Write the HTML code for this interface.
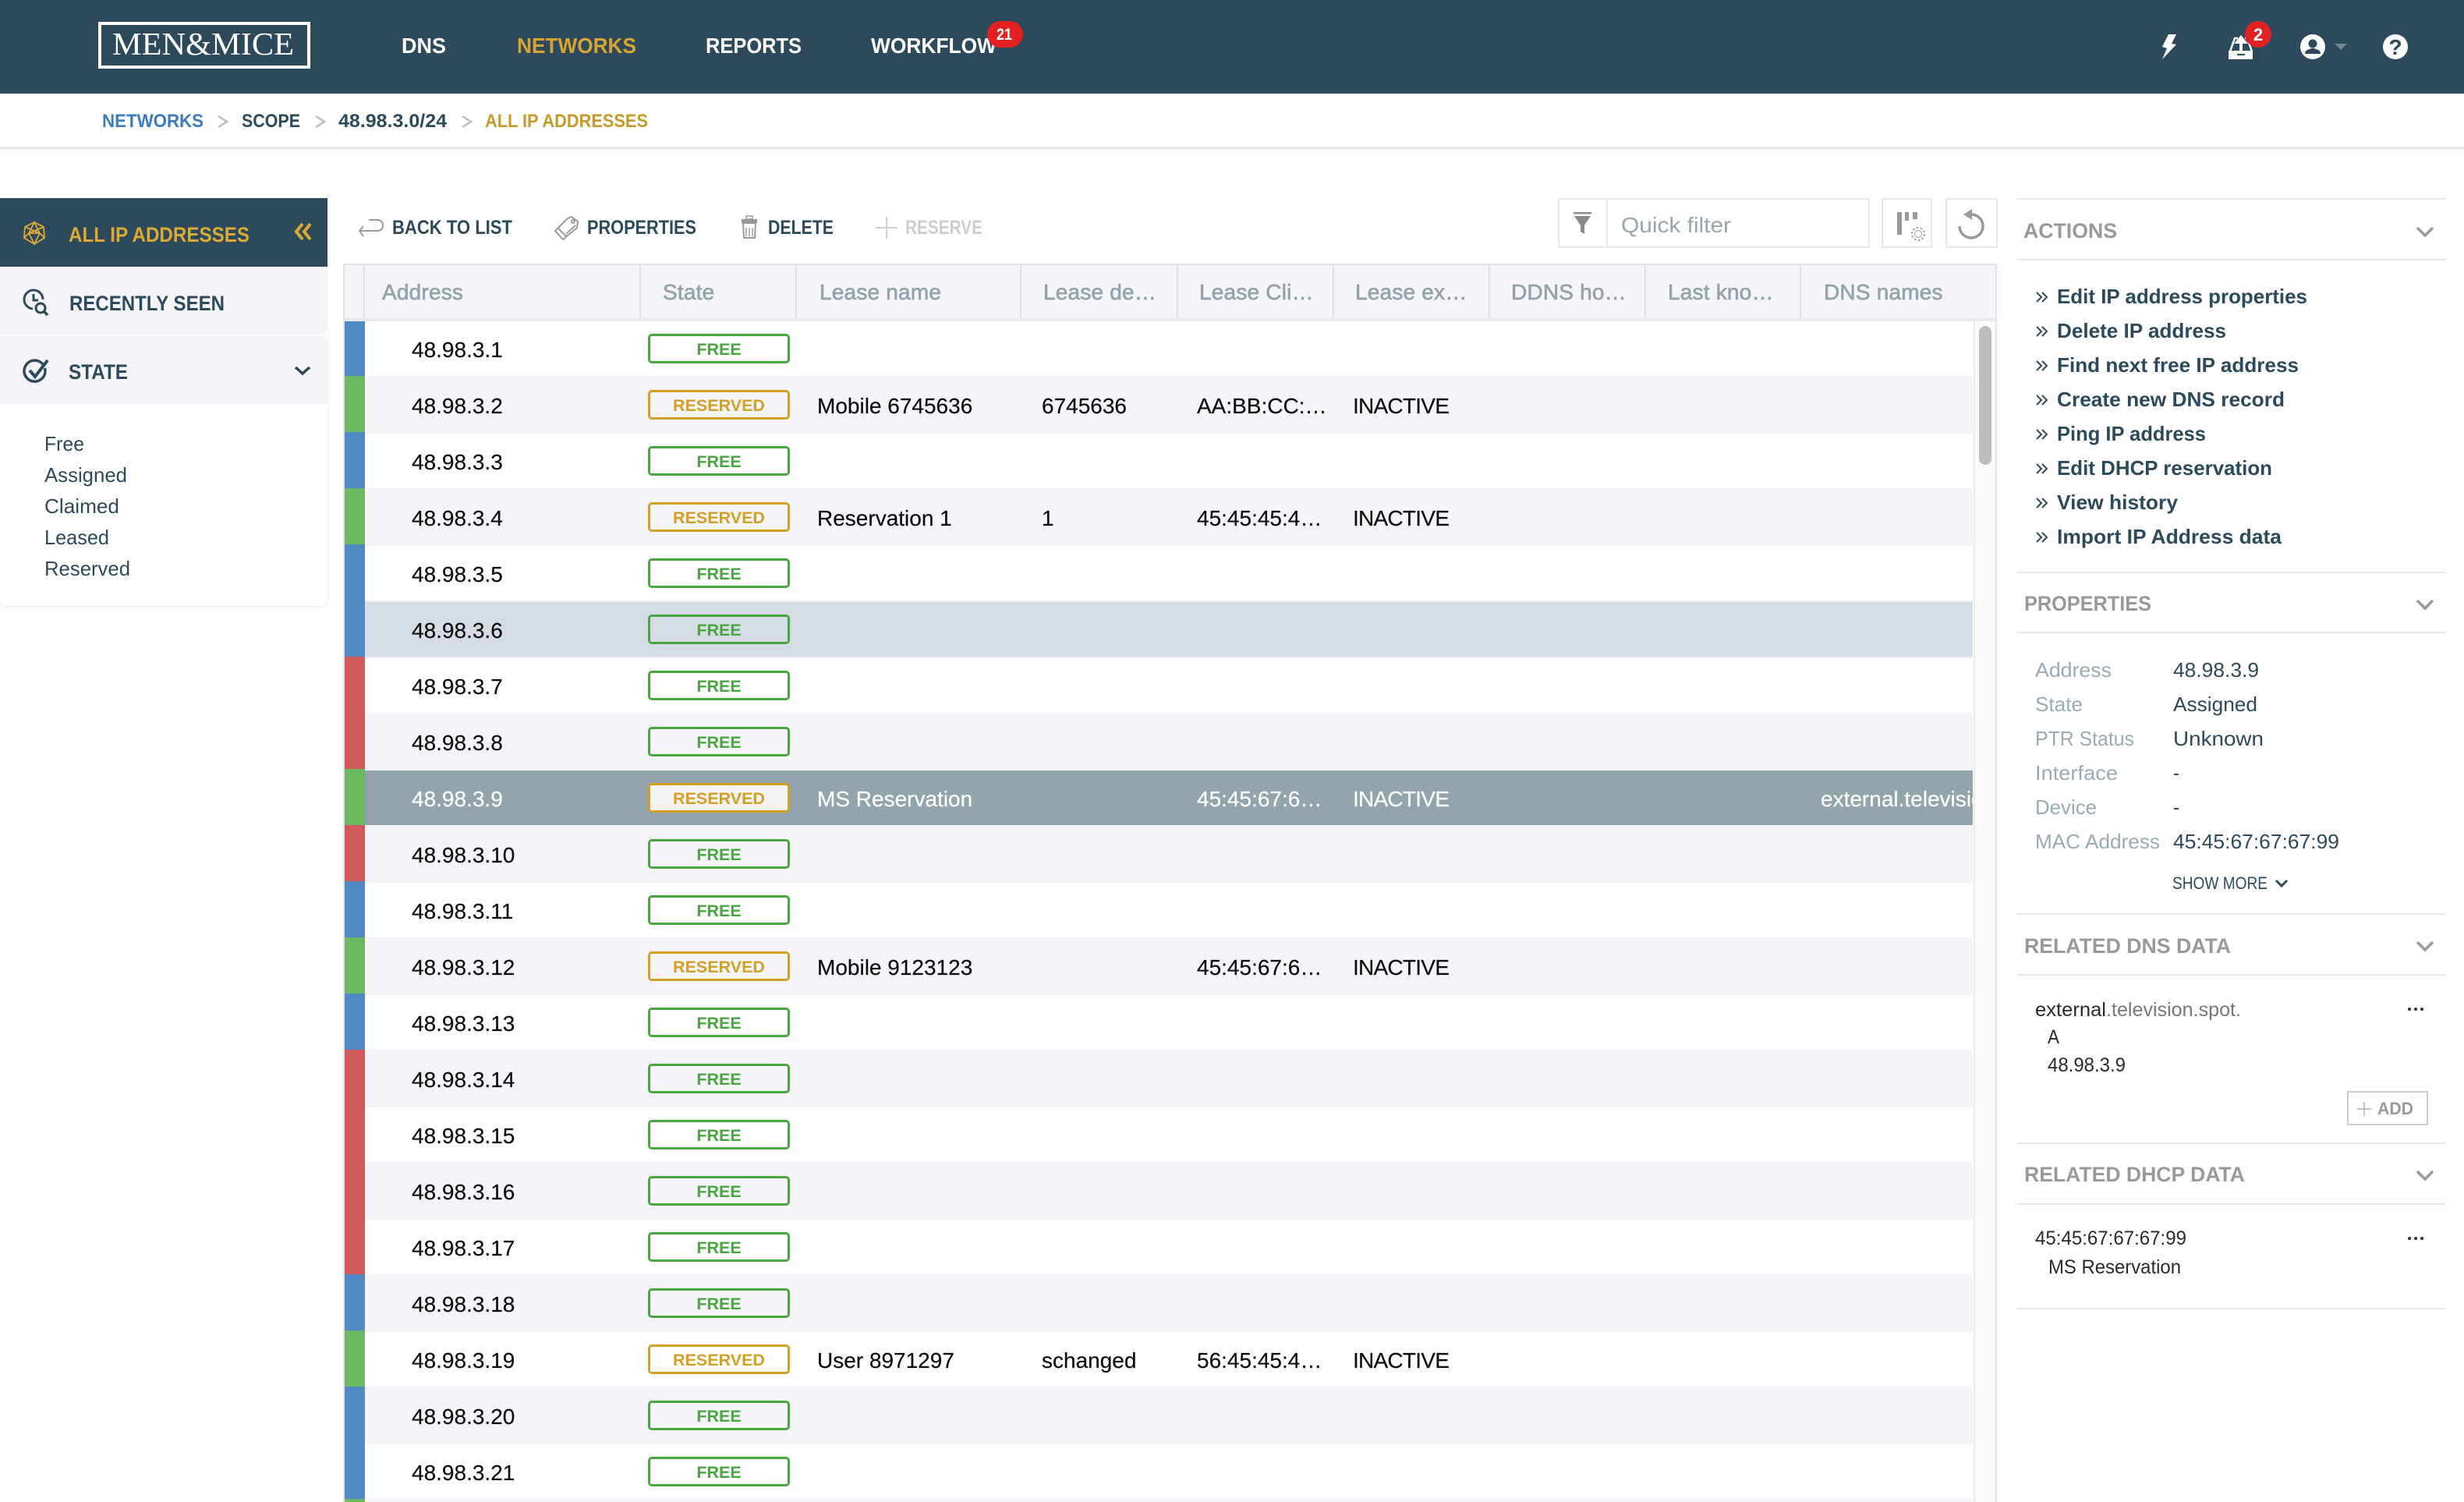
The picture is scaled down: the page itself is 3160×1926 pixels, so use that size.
<!DOCTYPE html>
<html lang="en">
<head>
<meta charset="utf-8">
<title>Men&amp;Mice - All IP Addresses</title>
<style>
html,body{margin:0;padding:0;background:#fff;width:3160px;height:1926px;overflow:hidden}
body{font-family:"Liberation Sans",Arial,sans-serif}
#page{position:absolute;left:0;top:0;width:3160px;height:1926px;overflow:hidden;contain:paint}
.box{position:absolute;box-sizing:border-box}
.r{position:absolute;left:468px;width:2062px;height:72px;font-size:28px;line-height:72px;color:#0e0e0e;-webkit-text-stroke:.2px currentColor}
.r span{position:absolute;top:1px;white-space:nowrap}
.r::before{content:"";position:absolute;left:0;right:0}
.e::before{top:-2px;bottom:0;background:#f4f4f9}
.s::before{top:0;bottom:2px;background:#93a4ac}
.h::before{top:0;bottom:2px;background:#d5dce4;box-shadow:0 -2px 0 #eeeef3,0 2px 0 #eeeef3}
.s{color:#fff}
.r i{position:absolute;left:-27px;top:-2px;width:27px;height:72px}
.bl i{background:#5089c4}.gr i{background:#6cb863}.rd i{background:#d05a5a}
.r b{position:absolute;left:363px;top:16px;width:182px;height:38px;box-sizing:border-box;border:3px solid;border-radius:5px;font-size:21.5px;line-height:34px;text-align:center;font-weight:700;-webkit-text-stroke:0}
.f{color:#4aa63f;border-color:#4aa63f}
.v{color:#d39f25;border-color:#d39f25}
.s b{background:#f2f2f2}
.n{left:60px}.l{left:580px}.c{left:868px}.m{left:1067px}.x{left:1267px;letter-spacing:-.75px}
.d{left:1867px;width:195px;overflow:hidden}
.th{position:absolute;top:340px;height:68px;line-height:70px;font-size:28px;color:#95a3ab;-webkit-text-stroke:.7px #95a3ab;white-space:nowrap;letter-spacing:.2px}
.dv{position:absolute;top:340px;width:2px;height:68px;background:#e2e2e6}
svg{position:absolute;left:0;top:0}
svg text{font-family:"Liberation Sans",Arial,sans-serif;white-space:pre}
</style>
</head>
<body>
<div id="page">
<div class="box" style="left:0;top:0;width:3160px;height:120px;background:#2c4a5c"></div>
<div class="box" style="left:0;top:188px;width:3160px;height:3px;background:#e6e6ea"></div>
<div class="box" style="left:0;top:191px;width:3160px;height:10px;background:linear-gradient(#f8f8fa,#fff)"></div>

<!-- sidebar -->
<div class="box" style="left:0;top:420px;width:420px;height:357px;background:#fff;border-radius:0 0 8px 8px;box-shadow:0 1px 5px rgba(0,0,0,.1)"></div>
<div class="box" style="left:0;top:342px;width:420px;height:87px;background:#f4f4f9;border-radius:0 0 8px 0"></div>
<div class="box" style="left:0;top:430px;width:420px;height:88px;background:#f4f4f9;border-radius:0 8px 0 0"></div>
<div class="box" style="left:0;top:254px;width:420px;height:88px;background:#2c4a5c"></div>

<!-- table rows -->
<div class="r bl" style="top:412px"><i></i><span class="n">48.98.3.1</span><b class="f">FREE</b></div>
<div class="r gr e" style="top:484px"><i></i><span class="n">48.98.3.2</span><b class="v">RESERVED</b><span class="l">Mobile 6745636</span><span class="c">6745636</span><span class="m">AA:BB:CC:…</span><span class="x">INACTIVE</span></div>
<div class="r bl" style="top:556px"><i></i><span class="n">48.98.3.3</span><b class="f">FREE</b></div>
<div class="r gr e" style="top:628px"><i></i><span class="n">48.98.3.4</span><b class="v">RESERVED</b><span class="l">Reservation 1</span><span class="c">1</span><span class="m">45:45:45:4…</span><span class="x">INACTIVE</span></div>
<div class="r bl" style="top:700px"><i></i><span class="n">48.98.3.5</span><b class="f">FREE</b></div>
<div class="r bl h" style="top:772px"><i></i><span class="n">48.98.3.6</span><b class="f">FREE</b></div>
<div class="r rd" style="top:844px"><i></i><span class="n">48.98.3.7</span><b class="f">FREE</b></div>
<div class="r rd e" style="top:916px"><i></i><span class="n">48.98.3.8</span><b class="f">FREE</b></div>
<div class="r gr s" style="top:988px"><i></i><span class="n">48.98.3.9</span><b class="v">RESERVED</b><span class="l">MS Reservation</span><span class="m">45:45:67:6…</span><span class="x">INACTIVE</span><span class="d">external.television.spot.</span></div>
<div class="r rd e" style="top:1060px"><i></i><span class="n">48.98.3.10</span><b class="f">FREE</b></div>
<div class="r bl" style="top:1132px"><i></i><span class="n">48.98.3.11</span><b class="f">FREE</b></div>
<div class="r gr e" style="top:1204px"><i></i><span class="n">48.98.3.12</span><b class="v">RESERVED</b><span class="l">Mobile 9123123</span><span class="m">45:45:67:6…</span><span class="x">INACTIVE</span></div>
<div class="r bl" style="top:1276px"><i></i><span class="n">48.98.3.13</span><b class="f">FREE</b></div>
<div class="r rd e" style="top:1348px"><i></i><span class="n">48.98.3.14</span><b class="f">FREE</b></div>
<div class="r rd" style="top:1420px"><i></i><span class="n">48.98.3.15</span><b class="f">FREE</b></div>
<div class="r rd e" style="top:1492px"><i></i><span class="n">48.98.3.16</span><b class="f">FREE</b></div>
<div class="r rd" style="top:1564px"><i></i><span class="n">48.98.3.17</span><b class="f">FREE</b></div>
<div class="r bl e" style="top:1636px"><i></i><span class="n">48.98.3.18</span><b class="f">FREE</b></div>
<div class="r gr" style="top:1708px"><i></i><span class="n">48.98.3.19</span><b class="v">RESERVED</b><span class="l">User 8971297</span><span class="c">schanged</span><span class="m">56:45:45:4…</span><span class="x">INACTIVE</span></div>
<div class="r bl e" style="top:1780px"><i></i><span class="n">48.98.3.20</span><b class="f">FREE</b></div>
<div class="r bl" style="top:1852px"><i></i><span class="n">48.98.3.21</span><b class="f">FREE</b></div>
<div class="r gr e" style="top:1924px;height:2px"><i></i></div>

<!-- table chrome -->
<div class="box" style="left:440px;top:338px;width:2px;height:1588px;background:#e2e2e6"></div>
<div class="box" style="left:2531px;top:412px;width:28px;height:1514px;background:#fafafa;border-left:2px solid #ececec"></div>
<div class="box" style="left:2559px;top:338px;width:2px;height:1588px;background:#e4e4e6"></div>
<div class="box" style="left:2538px;top:418px;width:16px;height:178px;background:#bdbdbd;border-radius:8px"></div>
<div class="box" style="left:440px;top:338px;width:2121px;height:74px;background:#f4f4f9;border-top:2px solid #e2e2e6;border-left:2px solid #e2e2e6;border-right:2px solid #e2e2e6;border-bottom:4px solid #e9e9ec"></div>
<div class="dv" style="left:466px"></div><div class="dv" style="left:820px"></div><div class="dv" style="left:1020px"></div><div class="dv" style="left:1308px"></div><div class="dv" style="left:1509px"></div><div class="dv" style="left:1709px"></div><div class="dv" style="left:1909px"></div><div class="dv" style="left:2109px"></div><div class="dv" style="left:2308px"></div>
<div class="th" style="left:490px">Address</div>
<div class="th" style="left:850px">State</div>
<div class="th" style="left:1051px">Lease name</div>
<div class="th" style="left:1338px">Lease de…</div>
<div class="th" style="left:1538px">Lease Cli…</div>
<div class="th" style="left:1738px">Lease ex…</div>
<div class="th" style="left:1938px">DDNS ho…</div>
<div class="th" style="left:2139px">Last kno…</div>
<div class="th" style="left:2339px">DNS names</div>

<!-- filter controls -->
<div class="box" style="left:1998px;top:254px;width:400px;height:64px;border:2px solid #e8e8e8"></div>
<div class="box" style="left:2060px;top:254px;width:2px;height:64px;background:#e8e8e8"></div>
<div class="box" style="left:2413px;top:254px;width:65px;height:64px;border:2px solid #e8e8e8"></div>
<div class="box" style="left:2495px;top:254px;width:67px;height:64px;border:2px solid #e8e8e8"></div>

<svg width="3160" height="1926" viewBox="0 0 3160 1926" xmlns="http://www.w3.org/2000/svg">
<!-- logo -->
<rect x="128" y="30" width="268" height="56" fill="none" stroke="#fff" stroke-width="4"/>
<text x="144" y="70" font-size="41" fill="#fff" style="font-family:'Liberation Serif',serif" textLength="233" lengthAdjust="spacingAndGlyphs">MEN&amp;MICE</text>
<!-- nav -->
<g font-size="28" font-weight="700" fill="#fff">
<text x="515" y="68" textLength="57" lengthAdjust="spacingAndGlyphs">DNS</text>
<text x="663" y="68" textLength="153" lengthAdjust="spacingAndGlyphs" fill="#d8a431">NETWORKS</text>
<text x="905" y="68" textLength="123" lengthAdjust="spacingAndGlyphs">REPORTS</text>
<text x="1117" y="68" textLength="161" lengthAdjust="spacingAndGlyphs">WORKFLOW</text>
</g>
<rect x="1266" y="27" width="46" height="34" rx="17" fill="#e22222"/>
<text x="1278" y="51" font-size="21" font-weight="700" fill="#fff" textLength="20" lengthAdjust="spacingAndGlyphs">21</text>
<!-- lightning -->
<polygon points="2781,44 2791,44 2785,56 2791,57 2773,76 2779,62 2773,60" fill="#fff"/>
<!-- inbox -->
<path d="M2859 65h30v11h-31v-11z" fill="#fff"/>
<rect x="2869" y="69" width="10" height="2" fill="#2c4a5c"/>
<path d="M2860 66l6-17h4M2888 66l-6-17h-3" fill="none" stroke="#fff" stroke-width="2.5"/>
<polygon points="2874,45 2865,56 2872,56 2872,66 2876,66 2876,56 2883,56" fill="#fff"/>
<ellipse cx="2896" cy="44" rx="17" ry="17" fill="#e22222"/>
<text x="2896" y="52" font-size="22" font-weight="700" fill="#fff" text-anchor="middle">2</text>
<!-- user -->
<circle cx="2966" cy="60" r="16" fill="#fff"/>
<circle cx="2966" cy="56" r="5.5" fill="#2c4a5c"/>
<path d="M2956 69q0-5 6-6l2-1h4l2 1q6 1 6 6z" fill="#2c4a5c"/>
<polygon points="2994,56 3010,56 3002,64" fill="#6f8590"/>
<!-- help -->
<circle cx="3072" cy="60" r="16" fill="#fff"/>
<text x="3072" y="70" font-size="28" font-weight="700" fill="#2c4a5c" text-anchor="middle">?</text>

<!-- breadcrumb -->
<g font-size="24" font-weight="700">
<text x="131" y="163" fill="#3a7cbd" textLength="130" lengthAdjust="spacingAndGlyphs">NETWORKS</text>
<text x="310" y="163" fill="#2b4a5c" textLength="75" lengthAdjust="spacingAndGlyphs">SCOPE</text>
<text x="434" y="163" fill="#2b4a5c" textLength="139" lengthAdjust="spacingAndGlyphs">48.98.3.0/24</text>
<text x="622" y="163" fill="#c69a2a" textLength="209" lengthAdjust="spacingAndGlyphs">ALL IP ADDRESSES</text>
</g>
<path d="M280 149l11 7-11 7M405 149l11 7-11 7M593 149l11 7-11 7" fill="none" stroke="#b8bec4" stroke-width="2.5"/>

<!-- sidebar -->
<g fill="none" stroke="#dca934" stroke-width="1.8">
<polygon points="44,285 56,291 57,305 44,313 31,305 32,291"/>
<path d="M44 285L37 299L44 313L51 299ZM32 291L51 299M56 291L37 299M31 305L37 299M57 305L51 299M37 299H51"/>
</g>
<text x="88" y="310" font-size="27" font-weight="700" fill="#dca934" textLength="232" lengthAdjust="spacingAndGlyphs">ALL IP ADDRESSES</text>
<path d="M388 287l-8 10 8 10M398 287l-8 10 8 10" fill="none" stroke="#dca934" stroke-width="4"/>
<g fill="none" stroke="#2c4a5c" stroke-width="3">
<path d="M42 396A12 12 0 1 1 55 384"/>
<path d="M43 377v8h6"/>
<circle cx="52" cy="395" r="6"/>
<path d="M56 399l5 5" stroke-width="3.5"/>
</g>
<text x="89" y="398" font-size="27" font-weight="700" fill="#2c4a5c" textLength="199" lengthAdjust="spacingAndGlyphs">RECENTLY SEEN</text>
<path d="M55 468A13.5 13.5 0 1 1 52 465" fill="none" stroke="#2c4a5c" stroke-width="3.5" transform="rotate(20 45 477)"/>
<path d="M38 475l7 8 16-21" fill="none" stroke="#2c4a5c" stroke-width="4"/>
<text x="88" y="486" font-size="27" font-weight="700" fill="#2c4a5c" textLength="76" lengthAdjust="spacingAndGlyphs">STATE</text>
<path d="M379 471l9 8 9-8" fill="none" stroke="#2c4a5c" stroke-width="3.5"/>
<g font-size="26" fill="#2c4a5c">
<text x="57" y="578" textLength="51" lengthAdjust="spacingAndGlyphs">Free</text>
<text x="57" y="618" textLength="106" lengthAdjust="spacingAndGlyphs">Assigned</text>
<text x="57" y="658" textLength="96" lengthAdjust="spacingAndGlyphs">Claimed</text>
<text x="57" y="698" textLength="83" lengthAdjust="spacingAndGlyphs">Leased</text>
<text x="57" y="738" textLength="110" lengthAdjust="spacingAndGlyphs">Reserved</text>
</g>

<!-- toolbar -->
<g fill="none" stroke="#9a9a9a" stroke-width="2">
<path d="M473 282H483Q491 282 491 289Q491 296 483 296H461M466 290L461 296L466 303"/>
<path d="M733 278L741 284L740 292L722 307L712 296L728 280Z"/>
<circle cx="735" cy="284" r="2"/>
<path d="M716 293L727 304M726 300L738 289"/>
</g>
<g fill="none" stroke="#9a9a9a" stroke-width="2">
<path d="M953 286H969L968 305H954Z"/>
<path d="M957 292V303M961 292V303M965 292V303" stroke-width="1.4"/>
</g>
<rect x="951" y="281" width="20" height="5" fill="#9a9a9a"/>
<rect x="957" y="277" width="8" height="4" fill="none" stroke="#9a9a9a" stroke-width="1.5"/>
<path d="M1137 278V306M1123 292H1151" stroke="#cfd1d3" stroke-width="2"/>
<g font-size="25" font-weight="700" fill="#2c4a5c">
<text x="503" y="300" textLength="154" lengthAdjust="spacingAndGlyphs">BACK TO LIST</text>
<text x="753" y="300" textLength="140" lengthAdjust="spacingAndGlyphs">PROPERTIES</text>
<text x="985" y="300" textLength="84" lengthAdjust="spacingAndGlyphs">DELETE</text>
<text x="1161" y="300" textLength="99" lengthAdjust="spacingAndGlyphs" fill="#cbced1">RESERVE</text>
</g>

<!-- filter icons -->
<rect x="2018" y="272" width="23" height="2.5" fill="#8a8a8a"/>
<polygon points="2019,277 2040,277 2032,289 2032,300 2027,297 2027,289" fill="#8a8a8a"/>
<text x="2079" y="298" font-size="28" fill="#9aa5ac" textLength="141" lengthAdjust="spacingAndGlyphs">Quick filter</text>
<rect x="2433" y="272" width="6" height="29" fill="#999"/>
<rect x="2443" y="272" width="5" height="11" fill="#999"/>
<rect x="2453" y="272" width="6" height="9" fill="#999"/>
<circle cx="2460" cy="300" r="4.5" fill="none" stroke="#aaa" stroke-width="1.2"/>
<circle cx="2460" cy="300" r="8" fill="none" stroke="#aaa" stroke-width="2" stroke-dasharray="3 2"/>
<path d="M2527 275A15 15 0 1 1 2513 290" fill="none" stroke="#999" stroke-width="3.5"/>
<polygon points="2529,268 2529,282 2518,275" fill="#999"/>

<!-- right panel lines -->
<g fill="#e8e8ea">
<rect x="2586" y="254" width="551" height="2"/><rect x="2586" y="332" width="551" height="2"/>
<rect x="2586" y="733" width="551" height="2"/><rect x="2586" y="810" width="551" height="2"/>
<rect x="2586" y="1171" width="551" height="2"/><rect x="2586" y="1249" width="551" height="2"/>
<rect x="2586" y="1465" width="551" height="2"/><rect x="2586" y="1543" width="551" height="2"/>
<rect x="2586" y="1677" width="551" height="2"/>
</g>
<g font-size="27" font-weight="700" fill="#999">
<text x="2595" y="305" textLength="120" lengthAdjust="spacingAndGlyphs">ACTIONS</text>
<text x="2596" y="783" textLength="163" lengthAdjust="spacingAndGlyphs">PROPERTIES</text>
<text x="2596" y="1222" textLength="265" lengthAdjust="spacingAndGlyphs">RELATED DNS DATA</text>
<text x="2596" y="1515" textLength="283" lengthAdjust="spacingAndGlyphs">RELATED DHCP DATA</text>
</g>
<path d="M3100 292l10 10 10-10M3100 770l10 10 10-10M3100 1208l10 10 10-10M3100 1502l10 10 10-10" fill="none" stroke="#999" stroke-width="3.5"/>

<!-- actions -->
<path d="M2612 375l6 6-6 6M2619 375l6 6-6 6M2612 419l6 6-6 6M2619 419l6 6-6 6M2612 463l6 6-6 6M2619 463l6 6-6 6M2612 507l6 6-6 6M2619 507l6 6-6 6M2612 551l6 6-6 6M2619 551l6 6-6 6M2612 595l6 6-6 6M2619 595l6 6-6 6M2612 639l6 6-6 6M2619 639l6 6-6 6M2612 683l6 6-6 6M2619 683l6 6-6 6" fill="none" stroke="#2c4a5c" stroke-width="2"/>
<g font-size="26" font-weight="700" fill="#2c4a5c">
<text x="2638" y="389" textLength="321" lengthAdjust="spacingAndGlyphs">Edit IP address properties</text>
<text x="2638" y="433" textLength="217" lengthAdjust="spacingAndGlyphs">Delete IP address</text>
<text x="2638" y="477" textLength="310" lengthAdjust="spacingAndGlyphs">Find next free IP address</text>
<text x="2638" y="521" textLength="292" lengthAdjust="spacingAndGlyphs">Create new DNS record</text>
<text x="2638" y="565" textLength="191" lengthAdjust="spacingAndGlyphs">Ping IP address</text>
<text x="2638" y="609" textLength="276" lengthAdjust="spacingAndGlyphs">Edit DHCP reservation</text>
<text x="2638" y="653" textLength="155" lengthAdjust="spacingAndGlyphs">View history</text>
<text x="2638" y="697" textLength="288" lengthAdjust="spacingAndGlyphs">Import IP Address data</text>
</g>

<!-- properties -->
<g font-size="26" fill="#9aabb5">
<text x="2610" y="868" textLength="98" lengthAdjust="spacingAndGlyphs">Address</text>
<text x="2610" y="912" textLength="61" lengthAdjust="spacingAndGlyphs">State</text>
<text x="2610" y="956" textLength="127" lengthAdjust="spacingAndGlyphs">PTR Status</text>
<text x="2610" y="1000" textLength="106" lengthAdjust="spacingAndGlyphs">Interface</text>
<text x="2610" y="1044" textLength="79" lengthAdjust="spacingAndGlyphs">Device</text>
<text x="2610" y="1088" textLength="160" lengthAdjust="spacingAndGlyphs">MAC Address</text>
</g>
<g font-size="26" fill="#2c4a5c">
<text x="2787" y="868" textLength="110" lengthAdjust="spacingAndGlyphs">48.98.3.9</text>
<text x="2787" y="912" textLength="108" lengthAdjust="spacingAndGlyphs">Assigned</text>
<text x="2787" y="956" textLength="116" lengthAdjust="spacingAndGlyphs">Unknown</text>
<text x="2787" y="1000" textLength="8" lengthAdjust="spacingAndGlyphs">-</text>
<text x="2787" y="1044" textLength="8" lengthAdjust="spacingAndGlyphs">-</text>
<text x="2787" y="1088" textLength="213" lengthAdjust="spacingAndGlyphs">45:45:67:67:67:99</text>
</g>
<text x="2786" y="1140" font-size="22" fill="#2c4a5c" textLength="122" lengthAdjust="spacingAndGlyphs">SHOW MORE</text>
<path d="M2919 1129l7 7 7-7" fill="none" stroke="#2c4a5c" stroke-width="3"/>

<!-- related -->
<g font-size="25" fill="#2a2a2a">
<text x="2610" y="1303" textLength="91" lengthAdjust="spacingAndGlyphs">external</text>
<text x="2701" y="1303" fill="#777" textLength="173" lengthAdjust="spacingAndGlyphs">.television.spot.</text>
<text x="2626" y="1338" textLength="15" lengthAdjust="spacingAndGlyphs">A</text>
<text x="2626" y="1374" textLength="100" lengthAdjust="spacingAndGlyphs">48.98.3.9</text>
<text x="2610" y="1596" textLength="194" lengthAdjust="spacingAndGlyphs">45:45:67:67:67:99</text>
<text x="2627" y="1633" textLength="170" lengthAdjust="spacingAndGlyphs">MS Reservation</text>
</g>
<g fill="#333">
<circle cx="3090" cy="1294" r="2"/><circle cx="3098" cy="1294" r="2"/><circle cx="3106" cy="1294" r="2"/>
<circle cx="3090" cy="1588" r="2"/><circle cx="3098" cy="1588" r="2"/><circle cx="3106" cy="1588" r="2"/>
</g>
<rect x="3011" y="1400" width="102" height="42" fill="#fff" stroke="#ccc" stroke-width="2"/>
<path d="M3032 1413V1431M3023 1422H3041" stroke="#bbb" stroke-width="1.8"/>
<text x="3049" y="1429" font-size="22" font-weight="700" fill="#999" textLength="46" lengthAdjust="spacingAndGlyphs">ADD</text>
</svg>
</div>
</body>
</html>
